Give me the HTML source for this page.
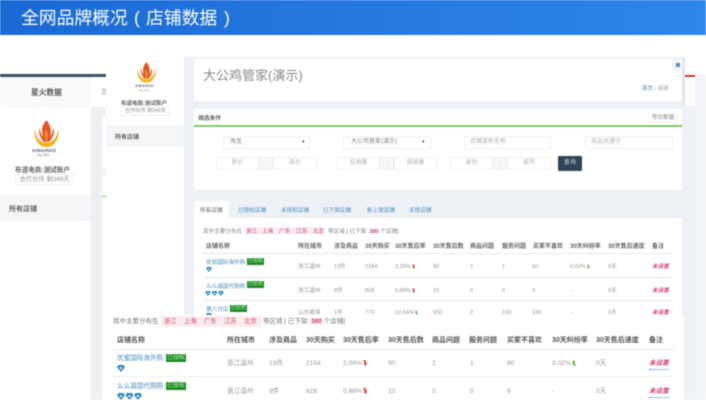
<!DOCTYPE html>
<html lang="zh"><head><meta charset="utf-8"><style>
*{box-sizing:border-box}
html,body{margin:0;padding:0;width:706px;height:400px;overflow:hidden;background:#fff}
body{font-family:"Liberation Sans","Noto Sans CJK SC",sans-serif;position:relative;color:#676a6c}
.a{position:absolute;white-space:nowrap}
#w{position:absolute;left:0;top:0;width:706px;height:400px;filter:blur(.4px);overflow:hidden}
.box{position:absolute;background:#fff;border:1px solid #eff0f2;color:#b5b5b5;font-size:6px;text-align:center;height:13px;line-height:11px}
.h{font-size:6px;line-height:8px;font-weight:bold;color:#666;top:243px;position:absolute;white-space:nowrap}
.H{font-size:7px;line-height:10px;font-weight:bold;color:#555;top:336px;position:absolute;white-space:nowrap}
.l{color:#4a8dbd !important}
.g{position:absolute;background:#1c8a24;color:#bff0bf;text-align:center;white-space:nowrap}
.g1{font-size:5px;width:17px;height:7px;line-height:7px}
.g2{font-size:6px;width:20px;height:8px;line-height:8px}
.r{position:absolute;white-space:nowrap;color:#d3426f;font-style:italic;font-weight:bold}
.t{position:absolute;white-space:nowrap;font-size:5.6px;line-height:8px;color:#999;margin-top:1.5px}
.T{position:absolute;white-space:nowrap;font-size:6.6px;line-height:10px;color:#999;margin-top:1px}
.tab{position:absolute;white-space:nowrap;font-size:5.6px;line-height:8px;top:207px;color:#4a8dbd}
.opt{position:absolute;left:78px;top:0;color:#444;font-size:5px}
.ar{display:inline-block;vertical-align:-1px;margin-left:1px}
</style></head><body><div id="w">
<svg width="0" height="0" style="position:absolute"><defs>
<symbol id="d" viewBox="0 0 8 7"><path d="M1.5 0H6.5L8 2.2 4 7 0 2.2Z" fill="#2f86b8"/><path d="M2 2.2H6L4 5Z" fill="#bfe3f5"/></symbol>
<symbol id="dn" viewBox="0 0 4 6"><path d="M0 0.5H3V3.5H4L2.2 6 0.8 3.5H1.6V1.5H0Z" fill="#e01515"/></symbol>
<symbol id="up" viewBox="0 0 4 6"><path d="M4 5.5H1V2.5H0L1.8 0 3.2 2.5H2.4V4.5H4Z" fill="#45b02a"/></symbol>
</defs></svg>

<div class="a" style="left:0;top:0;width:706px;height:35px;background:linear-gradient(90deg,#1b69d4,#2f86ea)"></div>
<div class="a" style="left:21px;top:0;line-height:36px;font-size:17.8px;color:#fff">全网品牌概况</div>
<div class="a" style="left:134px;top:0;line-height:36px;font-size:17.8px;color:#fff">(</div>
<div class="a" style="left:146px;top:0;line-height:36px;font-size:17.8px;color:#fff">店铺数据</div>
<div class="a" style="left:224px;top:0;line-height:36px;font-size:17.8px;color:#fff">)</div>

<!-- layer 1 -->
<div class="a" style="left:0;top:74px;width:106px;height:3px;background:#3d4f5f"></div>
<div class="a" style="left:0;top:77px;width:91px;height:30px;background:#f8f9fa"></div>
<div class="a" style="left:31px;top:87px;font-size:7.7px;font-weight:bold;color:#555">星火数据</div>
<div class="a" style="left:91px;top:107px;width:11px;height:293px;background:#eef0f4"></div>
<div class="a" style="left:102px;top:107px;width:4px;height:10px;background:#eef0f4"></div>
<div class="a" style="left:102px;top:167px;width:4px;height:10px;background:#f3f4f6"></div>
<div class="a" style="left:102px;top:196px;width:4px;height:1px;background:#7ac143"></div>
<div class="a" style="left:101px;top:87px;font-size:7px;color:#aaa;width:5px;overflow:hidden">首</div>
<svg class="a" style="left:33px;top:120px" width="27" height="29" viewBox="0 0 30 32">
<path d="M15 0C10 6 9 10 11 19 8 14 8 11 7 9 6 14 8 20 12 24L18 24C23 19 24 13 23 9 22 12 21 15 19 19 21 11 19 5 15 0Z" fill="#e0562a"/>
<path d="M2 10C0 20 6 30 15 30 24 30 30 20 28 10 27 18 23 25 15 25 7 25 3 18 2 10Z" fill="#f4b21f"/>
<path d="M14 10C12 15 13 20 15 25 17 20 18 15 14 10Z" fill="#f08a25"/></svg>
<div class="a" style="left:32px;top:148px;font-size:4.6px;line-height:6px;font-weight:bold;color:#555;letter-spacing:.4px">XINGHUO</div>
<div class="a" style="left:37px;top:153px;font-size:3.4px;line-height:4px;color:#888">big data</div>
<div class="a" style="left:15px;top:164px;font-size:6.6px;font-weight:bold;color:#666">布道电商:测试账户</div>
<div class="a" style="left:15px;top:174px;width:59px;height:11px;border:1px solid #f0f0f0;font-size:6.3px;color:#999;text-align:center;line-height:9px">合作伙伴 剩346天</div>
<div class="a" style="left:0;top:195px;width:91px;height:27px;background:#f5f6f8"></div>
<div class="a" style="left:9px;top:204px;font-size:7px;font-weight:bold;color:#666">所有店铺</div>

<!-- layer 2 -->
<div class="a" style="left:106px;top:57px;width:78px;height:343px;background:#fff"></div>
<svg class="a" style="left:136px;top:62px" width="21" height="22" viewBox="0 0 30 32">
<path d="M15 0C10 6 9 10 11 19 8 14 8 11 7 9 6 14 8 20 12 24L18 24C23 19 24 13 23 9 22 12 21 15 19 19 21 11 19 5 15 0Z" fill="#e0562a"/>
<path d="M2 10C0 20 6 30 15 30 24 30 30 20 28 10 27 18 23 25 15 25 7 25 3 18 2 10Z" fill="#f4b21f"/>
<path d="M14 10C12 15 13 20 15 25 17 20 18 15 14 10Z" fill="#f08a25"/></svg>
<div class="a" style="left:135px;top:84px;font-size:3.6px;line-height:5px;font-weight:bold;color:#666;letter-spacing:.3px">XINGHUO</div>
<div class="a" style="left:139px;top:88px;font-size:2.8px;line-height:4px;color:#999">big data</div>
<div class="a" style="left:121px;top:99px;font-size:5.5px;font-weight:bold;color:#666">布道电商:测试账户</div>
<div class="a" style="left:121px;top:107px;width:49px;height:9px;border:1px solid #f0f0f0;font-size:5.2px;color:#999;text-align:center;line-height:7px">合作伙伴 剩346天</div>
<div class="a" style="left:106px;top:125px;width:78px;height:22px;background:#f5f6f8"></div>
<div class="a" style="left:115px;top:132px;font-size:6px;font-weight:bold;color:#666">所有店铺</div>

<div class="a" style="left:184px;top:57px;width:511px;height:343px;background:#eef1f5"></div>
<div class="a" style="left:695px;top:74px;width:11px;height:326px;background:#f2f4f7"></div>
<div class="a" style="left:685px;top:35px;width:10px;height:71px;background:#fff"></div>
<div class="a" style="left:685px;top:75px;width:10px;height:2px;background:#c23b32"></div>
<div class="a" style="left:682px;top:57px;width:3px;height:49px;background:#e3e6ea"></div>

<!-- title panel -->
<div class="a" style="left:194px;top:59px;width:488px;height:42px;background:#fff"></div>
<div class="a" style="left:203px;top:65px;font-size:13px;color:#888">大公鸡管家(演示)</div>
<div class="a" style="left:672px;top:59px;width:9px;height:12px;background:#f3f5f8"></div>
<div class="a" style="left:676px;top:63px;width:4px;height:4px;background:#5b8dba"></div>
<div class="a" style="left:642px;top:84px;font-size:5.6px;color:#aaa"><span class="l">首页</span> / 阖家</div>

<!-- filter panel -->
<div class="a" style="left:194px;top:109px;width:488px;height:81px;background:#fff"></div>
<div class="a" style="left:194px;top:125px;width:488px;height:1.5px;background:#82c768"></div>
<div class="a" style="left:198px;top:113px;font-size:5.8px;font-weight:bold;color:#666">筛选条件</div>
<div class="box" style="left:649px;top:114px;width:28px;height:9px;line-height:7px;font-size:5.6px;color:#888">导出数据</div>
<div class="box" style="left:223px;top:136px;width:87px;color:#888;text-align:left;padding-left:6px">淘宝<span class="opt">▾</span></div>
<div class="box" style="left:343px;top:136px;width:88px;color:#888;text-align:left;padding-left:7px">大公鸡管家(演示)<span class="opt">▾</span></div>
<div class="box" style="left:464px;top:136px;width:87px;text-align:left;padding-left:5px">店铺掌柜名称</div>
<div class="box" style="left:585px;top:136px;width:88px;text-align:left;padding-left:5px">商品关键字</div>
<div class="box" style="left:216px;top:157px;width:43px">供价</div>
<div class="box" style="left:259px;top:157px;width:14px;background:#f7f7f7">-</div>
<div class="box" style="left:273px;top:157px;width:44px">高价</div>
<div class="box" style="left:337px;top:157px;width:43px">低销量</div>
<div class="box" style="left:380px;top:157px;width:14px;background:#f7f7f7">-</div>
<div class="box" style="left:394px;top:157px;width:43px">高销量</div>
<div class="box" style="left:450px;top:157px;width:43px">省份</div>
<div class="box" style="left:493px;top:157px;width:14px;background:#f7f7f7">-</div>
<div class="box" style="left:507px;top:157px;width:44px">城市</div>
<div class="a" style="left:558px;top:156px;width:24px;height:15px;background:#2f4459;color:#c9d4e0;font-size:6px;text-align:center;line-height:15px;border-radius:1px">查询</div>

<!-- tabs -->
<div class="a" style="left:194px;top:201px;width:35px;height:17px;background:#fff"></div>
<div class="a" style="left:194px;top:218px;width:488px;height:182px;background:#fff"></div>
<div class="tab" style="left:200px;color:#666">所有店铺</div>
<div class="tab" style="left:238px">已授权店铺</div>
<div class="tab" style="left:281px">未授权店铺</div>
<div class="tab" style="left:323px">已下架店铺</div>
<div class="tab" style="left:367px">新上架店铺</div>
<div class="tab" style="left:409px">关怪店铺</div>

<div class="t" style="left:203px;top:226px;color:#888">其中主要分布在</div>
<div class="a" style="left:245px;top:227px;width:78px;height:7px;background:#fcecef"></div>
<div class="t" style="left:246px;top:226px;color:#c9476c">浙江</div>
<div class="t" style="left:262px;top:226px;color:#c9476c">上海</div>
<div class="t" style="left:279px;top:226px;color:#c9476c">广东</div>
<div class="t" style="left:296px;top:226px;color:#c9476c">江苏</div>
<div class="t" style="left:313px;top:226px;color:#c9476c">北京</div>
<div class="t" style="left:328px;top:226px;color:#888">等区域 [ 已下架: <b style="color:#d3426f">380</b> 个店铺]</div>

<div class="h" style="left:206px">店铺名称</div>
<div class="h" style="left:298px">所在城市</div>
<div class="h" style="left:334px">涉及商品</div>
<div class="h" style="left:365px">30天购买</div>
<div class="h" style="left:395px">30天售后率</div>
<div class="h" style="left:433px">30天售后数</div>
<div class="h" style="left:470px">商品问题</div>
<div class="h" style="left:502px">服务问题</div>
<div class="h" style="left:533px">买家不喜欢</div>
<div class="h" style="left:570px">30天纠纷率</div>
<div class="h" style="left:608px">30天售后速度</div>
<div class="h" style="left:652px">备注</div>
<div class="a" style="left:203px;top:253px;width:470px;height:1px;background:#e9e9e9"></div>
<div class="a" style="left:203px;top:277px;width:470px;height:1px;background:#e9e9e9"></div>
<div class="a" style="left:203px;top:300px;width:470px;height:1px;background:#e9e9e9"></div>

<div class="t l" style="left:206px;top:257px">优翁国际海外购</div><div class="g g1" style="left:247px;top:258px">已授权</div>
<svg class="a" style="left:206px;top:267px" width="6" height="5"><use href="#d"/></svg>
<div class="t" style="left:298px;top:261px">浙江温州</div><div class="t" style="left:334px;top:261px">13件</div><div class="t" style="left:365px;top:261px">2184</div><div class="t" style="left:395px;top:261px">2.09%<svg class="ar" width="3" height="5"><use href="#dn"/></svg></div><div class="t" style="left:433px;top:261px">90</div><div class="t" style="left:470px;top:261px">2</div><div class="t" style="left:502px;top:261px">1</div><div class="t" style="left:532px;top:261px">60</div><div class="t" style="left:570px;top:261px">0.02%<svg class="ar" width="3" height="5"><use href="#up"/></svg></div><div class="t" style="left:608px;top:261px">0天</div><div class="r t" style="left:652px;top:261px;color:#d3426f">未设置</div>

<div class="t l" style="left:206px;top:281px">么么滋国代购购</div><div class="g g1" style="left:247px;top:281px">已授权</div>
<svg class="a" style="left:205px;top:291px" width="20" height="5"><use href="#d" width="6" height="5"/><use href="#d" x="6.5" width="6" height="5"/><use href="#d" x="13" width="6" height="5"/></svg>
<div class="t" style="left:298px;top:285px">浙江温州</div><div class="t" style="left:334px;top:285px">8件</div><div class="t" style="left:365px;top:285px">828</div><div class="t" style="left:395px;top:285px">0.88%<svg class="ar" width="3" height="5"><use href="#dn"/></svg></div><div class="t" style="left:433px;top:285px">10</div><div class="t" style="left:470px;top:285px">0</div><div class="t" style="left:502px;top:285px">0</div><div class="t" style="left:532px;top:285px">9</div><div class="t" style="left:570px;top:285px">-</div><div class="t" style="left:608px;top:285px">0天</div><div class="r t" style="left:652px;top:285px;color:#d3426f">未设置</div>

<div class="t l" style="left:206px;top:304px">第六分店</div><div class="g g1" style="left:230px;top:305px">已授权</div>
<svg class="a" style="left:206px;top:313px" width="6" height="2"><use href="#d" width="6" height="5"/></svg>
<div class="t" style="left:298px;top:307px">山东威海</div><div class="t" style="left:334px;top:307px">1件</div><div class="t" style="left:365px;top:307px">773</div><div class="t" style="left:395px;top:307px">10.94%<svg class="ar" width="3" height="5"><use href="#up"/></svg></div><div class="t" style="left:433px;top:307px">650</div><div class="t" style="left:470px;top:307px">2</div><div class="t" style="left:502px;top:307px">230</div><div class="t" style="left:532px;top:307px">189</div><div class="t" style="left:570px;top:307px">-</div><div class="t" style="left:608px;top:307px">0天</div><div class="r t" style="left:652px;top:307px;color:#d3426f">未设置</div>

<!-- front layer -->
<div class="a" style="left:103px;top:315px;width:581px;height:85px;background:#fff"></div>
<div class="T" style="left:113px;top:316px;font-size:6.5px;color:#777">其中主要分布在</div>
<div class="a" style="left:161px;top:316px;width:100px;height:11px;background:#fcecef"></div>
<div class="T" style="left:164px;top:316px;font-size:6.3px;color:#c9476c">浙江</div>
<div class="T" style="left:184px;top:316px;font-size:6.3px;color:#c9476c">上海</div>
<div class="T" style="left:204px;top:316px;font-size:6.3px;color:#c9476c">广东</div>
<div class="T" style="left:224px;top:316px;font-size:6.3px;color:#c9476c">江苏</div>
<div class="T" style="left:244px;top:316px;font-size:6.3px;color:#c9476c">北京</div>
<div class="T" style="left:263px;top:316px;font-size:6.5px;color:#777">等区域 [ 已下架: <b style="color:#d3426f;background:#fcecef">380</b> 个店铺]</div>

<div class="H" style="left:117px">店铺名称</div>
<div class="H" style="left:227px">所在城市</div>
<div class="H" style="left:269px">涉及商品</div>
<div class="H" style="left:306px">30天购买</div>
<div class="H" style="left:343px">30天售后率</div>
<div class="H" style="left:388px">30天售后数</div>
<div class="H" style="left:432px">商品问题</div>
<div class="H" style="left:469px">服务问题</div>
<div class="H" style="left:507px">买家不喜欢</div>
<div class="H" style="left:552px">30天纠纷率</div>
<div class="H" style="left:596px">30天售后速度</div>
<div class="H" style="left:649px">备注</div>
<div class="a" style="left:113px;top:349px;width:561px;height:1px;background:#e9e9e9"></div>
<div class="a" style="left:113px;top:376px;width:561px;height:1px;background:#eee"></div>

<div class="T l" style="left:117px;top:353px">优蜜国际海外购</div><div class="g g2" style="left:166px;top:354px">已授权</div>
<svg class="a" style="left:117px;top:365px" width="8" height="7"><use href="#d"/></svg>
<div class="T" style="left:227px;top:358px">浙江温州</div><div class="T" style="left:269px;top:358px">13件</div><div class="T" style="left:306px;top:358px">2184</div><div class="T" style="left:343px;top:358px">2.09%<svg class="ar" width="4" height="6"><use href="#dn"/></svg></div><div class="T" style="left:388px;top:358px">90</div><div class="T" style="left:432px;top:358px">2</div><div class="T" style="left:470px;top:358px">1</div><div class="T" style="left:507px;top:358px">60</div><div class="T" style="left:552px;top:358px">0.02%<svg class="ar" width="4" height="6"><use href="#up"/></svg></div><div class="T" style="left:596px;top:358px">0天</div><div class="r T" style="left:649px;top:358px;color:#d3426f;border-bottom:1px dotted #3f84b5">未设置</div>

<div class="T l" style="left:117px;top:381px">么么滋国代购购</div><div class="g g2" style="left:166px;top:382px">已授权</div>
<svg class="a" style="left:117px;top:393px" width="26" height="7"><use href="#d" width="8" height="7"/><use href="#d" x="8.5" width="8" height="7"/><use href="#d" x="17" width="8" height="7"/></svg>
<div class="T" style="left:227px;top:386px">浙江温州</div><div class="T" style="left:269px;top:386px">8件</div><div class="T" style="left:306px;top:386px">828</div><div class="T" style="left:343px;top:386px">0.88%<svg class="ar" width="4" height="6"><use href="#dn"/></svg></div><div class="T" style="left:388px;top:386px">10</div><div class="T" style="left:432px;top:386px">0</div><div class="T" style="left:470px;top:386px">0</div><div class="T" style="left:507px;top:386px">9</div><div class="T" style="left:552px;top:386px">-</div><div class="T" style="left:596px;top:386px">0天</div><div class="r T" style="left:649px;top:386px;color:#d3426f;border-bottom:1px dotted #3f84b5">未设置</div>
</div></body></html>
